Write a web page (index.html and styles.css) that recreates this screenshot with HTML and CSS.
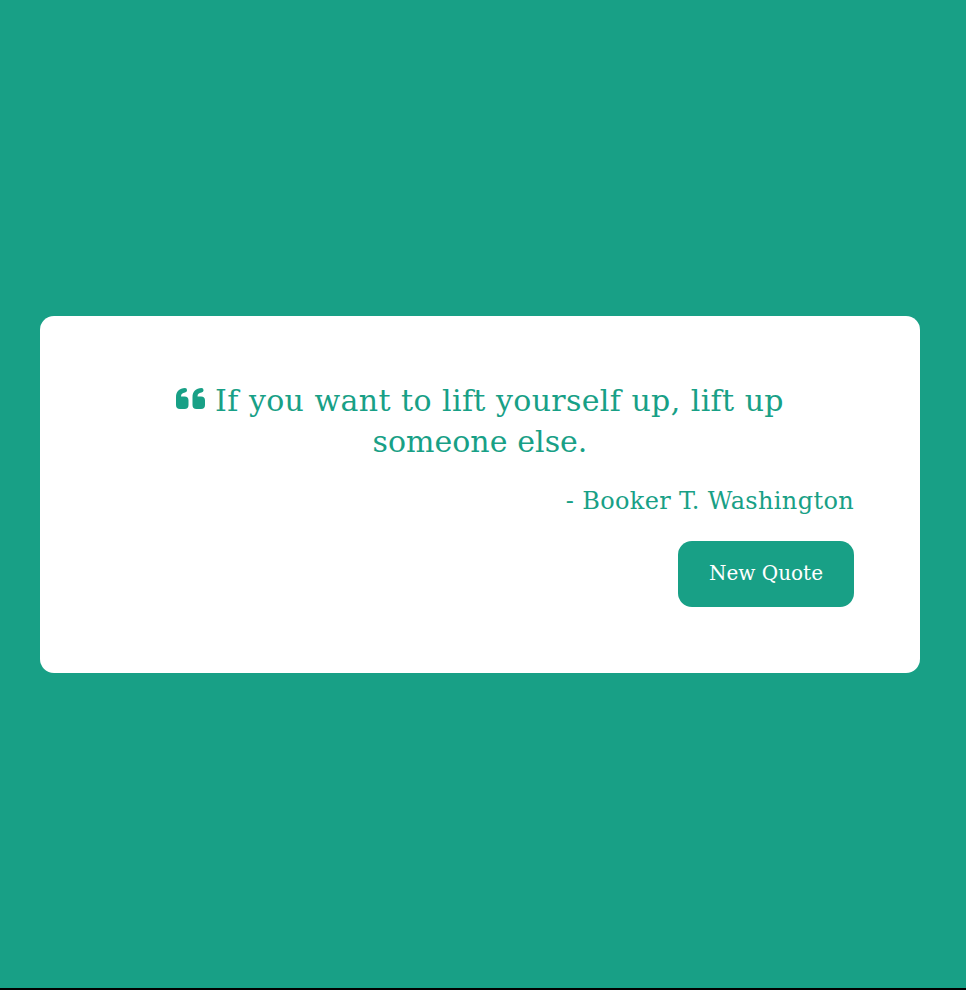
FILE: index.html
```html
<!DOCTYPE html>
<html lang="en">
<head>
<meta charset="utf-8">
<title>Random Quote</title>
<link rel="stylesheet" href="styles.css">
</head>
<body>
<main class="page">
  <section class="quote-box">
    <p class="quote">
      <svg class="quote-icon" viewBox="0 0 30 21" aria-hidden="true"><path d="M9 0C3.500 .2 0 3.500 0 9V17Q0 21 4 21H8.500Q12.500 21 12.500 17V12.500Q12.500 8.500 8.500 8.500H5C5 6 6.500 4.800 9 4.500Q11 4.200 11 2.500V2Q11 0 9 0ZM25.500 0C20 .2 16.500 3.500 16.500 9V17Q16.500 21 20.500 21H25Q29 21 29 17V12.500Q29 8.500 25 8.500H21.500C21.500 6 23 4.800 25.500 4.500Q27.500 4.200 27.500 2.500V2Q27.500 0 25.500 0Z"/></svg>
      <span class="first-line">If you want to lift yourself up, lift up</span><br>
      <span>someone else.</span>
    </p>
    <p class="author">- Booker T. Washington</p>
    <button class="new-quote" type="button">New Quote</button>
  </section>
</main>
</body>
</html>
```
FILE: styles.css
```css
* {
  box-sizing: border-box;
}

body {
  margin: 0;
  background: #18a086;
  color: #18a086;
  font-family: "DejaVu Serif", serif;
}

.page {
  height: 990px;
  padding: 0 46px 0 40px;
  display: flex;
  align-items: center;
  border-bottom: 2px solid #000;
}

.quote-box {
  width: 880px;
  height: 357px;
  padding: 64px 66px 66px;
  display: flex;
  flex-direction: column;
  align-items: flex-end;
  background: #fff;
  border-radius: 14px;
}

.quote {
  width: 100%;
  margin: 0;
  font-size: 30px;
  line-height: 41px;
  word-spacing: 0.4px;
  text-align: center;
  white-space: nowrap;
}

.first-line {
  letter-spacing: 0.33px;
}

.quote-icon {
  width: 30px;
  height: 21px;
  margin-right: -1px;
  vertical-align: 2px;
  fill: currentColor;
}

.author {
  margin: 22px 0 0;
  font-size: 24px;
  line-height: 34px;
  letter-spacing: 0.35px;
}

.new-quote {
  width: 176px;
  height: 66px;
  margin-top: 23px;
  padding: 0 0 1px;
  flex-shrink: 0;
  border: 0;
  border-radius: 14px;
  background: #18a086;
  color: #fff;
  font-family: inherit;
  font-size: 20px;
}
```
